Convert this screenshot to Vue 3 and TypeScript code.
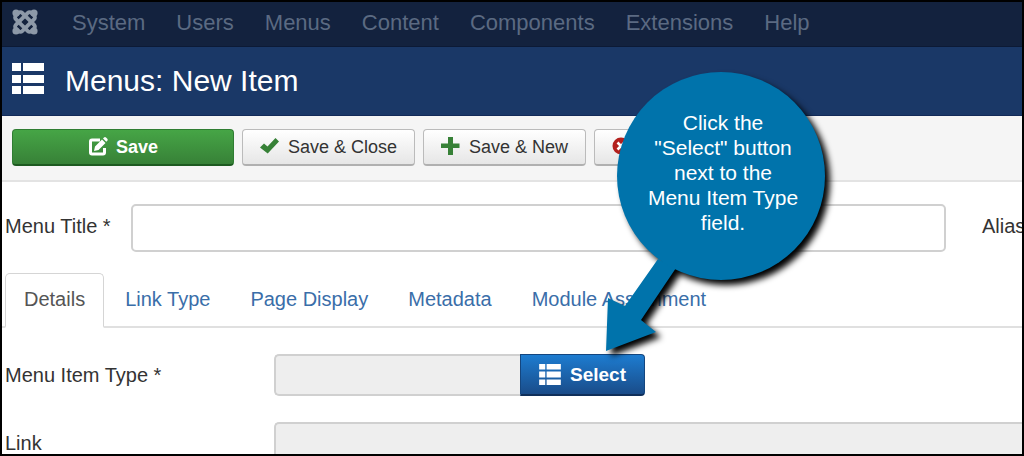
<script setup lang="ts">
import { ref } from 'vue'

const navItems: string[] = ['System', 'Users', 'Menus', 'Content', 'Components', 'Extensions', 'Help']
const tabs: string[] = ['Details', 'Link Type', 'Page Display', 'Metadata', 'Module Assignment']
const activeTab = ref('Details')
const menuTitle = ref('')
</script>

<template>
  <div class="page">
    <nav class="navbar">
      <a class="brand" href="#" aria-label="Joomla">
        <svg width="26" height="26" viewBox="0 0 26 26" fill="none" stroke="currentColor" stroke-width="3.800">
          <rect x="2" y="8.500" width="22" height="9" rx="2.500" transform="rotate(45 13 13)" />
          <rect x="2" y="8.500" width="22" height="9" rx="2.500" transform="rotate(135 13 13)" />
          <g fill="currentColor" stroke="none">
            <circle cx="4" cy="4" r="3.600" />
            <circle cx="22" cy="4" r="3.600" />
            <circle cx="4" cy="22" r="3.600" />
            <circle cx="22" cy="22" r="3.600" />
          </g>
        </svg>
      </a>
      <a v-for="item in navItems" :key="item" class="nav-link" href="#">{{ item }}</a>
    </nav>

    <header class="header">
      <svg width="32" height="32" viewBox="0 0 32 32" fill="currentColor" aria-hidden="true">
        <path d="M0 0h9v8H0zM11 0h21v8H11zM0 12h9v8H0zM11 12h21v8H11zM0 23h9v8H0zM11 23h21v8H11z" />
      </svg>
      <h1>Menus: New Item</h1>
    </header>

    <div class="toolbar">
      <button class="btn btn-success" type="button">
        <svg width="20" height="20" viewBox="0 0 20 20" fill="none" aria-hidden="true">
          <path d="M12 3H4Q2.500 3 2.500 4.500V15.500Q2.500 17 4 17H15Q16.500 17 16.500 15.500V11" stroke="currentColor" stroke-width="3" />
          <path d="M6 14l1-4.500 7-7 3.500 3.500-7 7zM15 1.500l1-1q1-.8 2 0l1.300 1.300q.8 1 0 2l-1 1z" fill="currentColor" />
        </svg>
        Save
      </button>
      <button class="btn" type="button">
        <svg class="green" width="20" height="20" viewBox="0 0 20 20" aria-hidden="true">
          <path d="M0 10.500L4 6.500 7.500 9.500 15.500 1 19 4.500 7.700 16.500z" fill="currentColor" />
        </svg>
        Save &amp; Close
      </button>
      <button class="btn" type="button">
        <svg class="green" width="20" height="20" viewBox="0 0 20 20" aria-hidden="true">
          <path d="M7 0h5v6.500h6.500v4.500H12V18H7v-7H0V6.500h7z" fill="currentColor" />
        </svg>
        Save &amp; New
      </button>
      <button class="btn btn-cancel" type="button" aria-label="Cancel">
        <svg class="red" width="20" height="20" viewBox="0 0 20 20" aria-hidden="true">
          <circle cx="9" cy="9" r="8.500" fill="currentColor" />
          <path d="M5.500 5.500l7 7M12.500 5.500l-7 7" stroke="#fff" stroke-width="2.600" />
        </svg>
      </button>
    </div>

    <main>
      <div class="title-row">
        <label for="menu-title">Menu Title *</label>
        <input id="menu-title" v-model="menuTitle" class="title-input" type="text" />
        <span class="alias-label">Alias</span>
      </div>

      <div class="tabs" role="tablist">
        <button
          v-for="tab in tabs"
          :key="tab"
          class="tab"
          :class="{ active: tab === activeTab }"
          type="button"
          role="tab"
          :aria-selected="tab === activeTab"
          @click="activeTab = tab"
        >{{ tab }}</button>
      </div>

      <div class="field">
        <label for="item-type">Menu Item Type *</label>
        <div class="input-group">
          <input id="item-type" type="text" readonly />
          <button class="btn-select" type="button">
            <svg width="22" height="21" viewBox="0 0 32 31" fill="currentColor" aria-hidden="true">
              <path d="M0 0h9v8H0zM11 0h21v8H11zM0 11h9v9H0zM11 11h21v9H11zM0 23h9v8H0zM11 23h21v8H11z" />
            </svg>
            Select
          </button>
        </div>
      </div>
      <div class="field">
        <label for="item-link">Link</label>
        <input id="item-link" class="link-input" type="text" readonly />
      </div>
    </main>

    <aside class="callout">
      <svg class="callout-shape" width="240" height="300" viewBox="0 0 240 300" aria-hidden="true">
        <path d="M58 199L25 246 8 238 6 291 56 272 41 260 76 208z" />
        <circle cx="121" cy="116" r="104" />
      </svg>
      <p>Click the<br />"Select" button<br />next to the<br />Menu Item Type<br />field.</p>
    </aside>
  </div>
</template>

<style>
body {
  margin: 0;
}
</style>

<style scoped>
.page {
  position: relative;
  box-sizing: border-box;
  height: 100vh;
  overflow: hidden;
  border: 2px solid #000;
  background: #fff;
  color: #333;
  font-family: "Liberation Sans", Arial, sans-serif;
  font-size: 20px;
}

.page * {
  box-sizing: border-box;
}

button,
input {
  font-family: inherit;
}

svg {
  flex: none;
}

.navbar {
  display: flex;
  align-items: center;
  gap: 31px;
  height: 45px;
  padding: 0 10px 2px;
  border-bottom: 1px solid #0c1a36;
  background: #13223e;
}

.brand {
  display: flex;
  margin: 0 3px 2px 0;
  color: #8d99a8;
}

.nav-link {
  color: #5b6a82;
  font-size: 22px;
  line-height: 40px;
  text-decoration: none;
}

.header {
  display: flex;
  align-items: center;
  gap: 21px;
  height: 69px;
  padding: 0 10px;
  border-bottom: 1px solid #122a58;
  background: #1a3867;
  color: #fff;
}

.header svg {
  margin-bottom: 4px;
}

h1 {
  margin: 0;
  font-size: 30px;
  font-weight: 400;
  line-height: 36px;
}

.toolbar {
  display: flex;
  gap: 8px;
  padding: 13px 10px 14px;
  border-bottom: 2px solid #e3e3e3;
  background: #f5f5f5;
}

.btn {
  display: flex;
  align-items: center;
  justify-content: center;
  gap: 8px;
  height: 37px;
  padding: 0 17px;
  border: 1px solid #bbb;
  border-bottom: 2px solid #b0b0b0;
  border-radius: 4px;
  background: linear-gradient(#fff, #e6e6e6);
  color: #333;
  font-size: 18px;
  white-space: nowrap;
}

.btn-success {
  width: 222px;
  border-color: #2f7d32 #2f7d32 #1d5a20;
  background: linear-gradient(#46a546, #378137);
  color: #fff;
  font-weight: 700;
}

.btn-cancel {
  justify-content: flex-start;
  width: 122px;
}

.green {
  color: #378137;
}

.red {
  color: #b3201d;
}

.title-row {
  display: flex;
  align-items: center;
  padding: 22px 0 21px 3px;
  line-height: 24px;
  white-space: nowrap;
}

.title-row label,
.title-row span {
  padding-bottom: 4px;
}

input {
  border: 2px solid #d0d0d0;
  border-radius: 5px;
  outline: none;
  background: #fff;
  font-size: 20px;
}

.title-input {
  flex: 1;
  height: 48px;
  margin-left: 20px;
}

.alias-label {
  width: 40px;
  margin-left: 36px;
}

.tabs {
  display: flex;
  gap: 2px;
  padding-left: 3px;
  border-bottom: 2px solid #e0e0e0;
}

.tab {
  height: 55px;
  margin-bottom: -2px;
  padding: 0 18px 2px;
  border: 1px solid transparent;
  border-radius: 5px 5px 0 0;
  background: transparent;
  color: #3a6ea9;
  font-size: 20px;
}

.tab.active {
  border-color: #d5d5d5;
  border-bottom: 2px solid #fff;
  background: #fff;
  color: #555;
}

.field {
  display: grid;
  grid-template-columns: 269px 1fr;
  align-items: center;
  padding: 26px 0 0 3px;
}

.input-group {
  display: flex;
}

.field input {
  height: 42px;
  background: #eee;
}

.input-group input {
  width: 246px;
  border-right: 0;
  border-radius: 5px 0 0 5px;
}

.field .link-input {
  width: 100%;
  border-right: 0;
  border-radius: 5px 0 0 5px;
}

.btn-select {
  display: flex;
  align-items: center;
  gap: 9px;
  height: 42px;
  padding: 0 18px;
  border: 1px solid #14467f;
  border-bottom: 2px solid #0f2f5a;
  border-radius: 0 4px 4px 0;
  background: linear-gradient(#1d7cd0, #1a4c89);
  color: #fff;
  font-size: 19px;
  font-weight: 700;
}

.callout {
  position: absolute;
  top: 58px;
  left: 598px;
  width: 240px;
  height: 300px;
  pointer-events: none;
}

.callout-shape {
  position: absolute;
  inset: 0;
  fill: #0073ab;
  filter: drop-shadow(5px 5px 3px #000);
}

.callout p {
  position: relative;
  margin: 0;
  padding: 50px 0 0 6px;
  color: #fff;
  font-size: 21px;
  line-height: 25px;
  text-align: center;
}
</style>
